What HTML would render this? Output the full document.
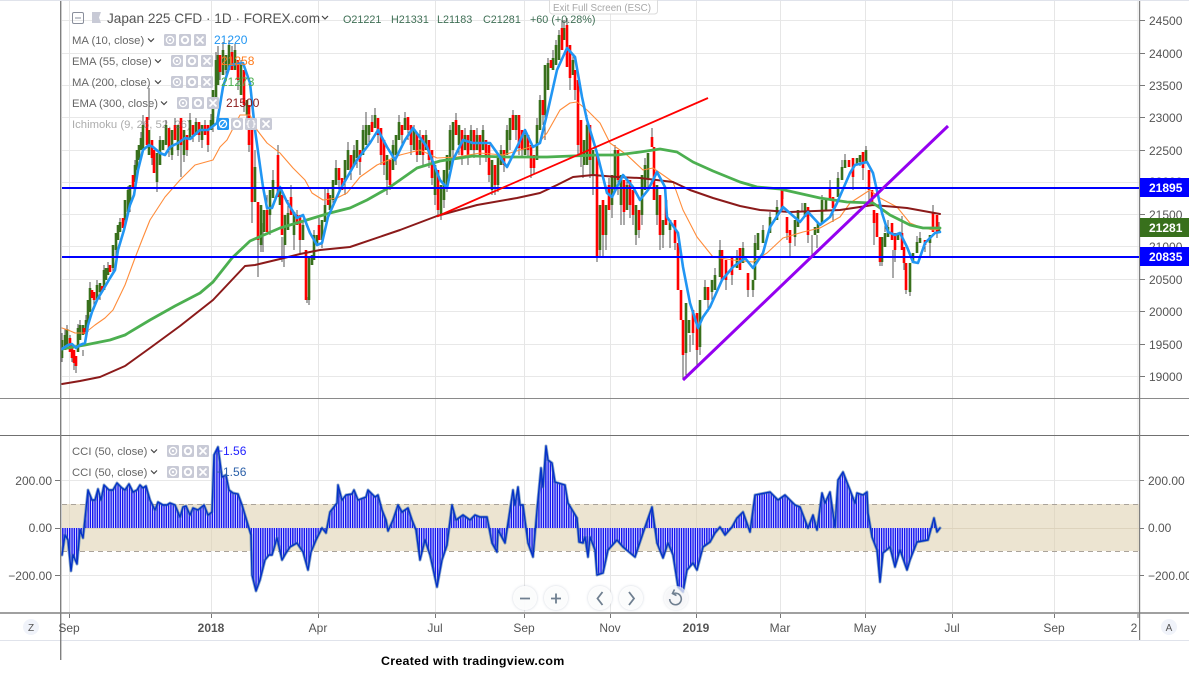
<!DOCTYPE html>
<html><head><meta charset="utf-8"><style>
html,body{margin:0;padding:0;background:#fff;width:1189px;height:680px;overflow:hidden}
svg{display:block;font-family:"Liberation Sans",sans-serif}
.ax{font-size:12px;fill:#555}
.lg{font-size:11.3px;fill:#666}
.hd{font-size:10.8px;fill:#3f6f55}
.m{fill:none;stroke-linejoin:round;stroke-linecap:round}
</style></head><body>
<svg id="s" width="1189" height="680" viewBox="0 0 1189 680" xmlns="http://www.w3.org/2000/svg">
<defs>
<pattern id="st" width="2.3" height="10" patternUnits="userSpaceOnUse"><rect width="2.3" height="10" fill="#fff"/><rect width="1.5" height="10" fill="#1616f0"/></pattern>
<g id="bn"><rect width="12" height="12" rx="1.5" fill="#c8cad6"/><circle cx="6" cy="6" r="3.6" fill="none" stroke="#fff" stroke-width="1.3"/><circle cx="6" cy="6" r="1.1" fill="#fff"/></g>
<g id="bg"><rect width="12" height="12" rx="1.5" fill="#c8cad6"/><circle cx="6" cy="6" r="3.2" fill="none" stroke="#fff" stroke-width="2"/></g>
<g id="bx"><rect width="12" height="12" rx="1.5" fill="#c8cad6"/><path d="M2.5 2.5L9.5 9.5M9.5 2.5L2.5 9.5" stroke="#fff" stroke-width="1.7"/></g>
<g id="tr"><use href="#bn" x="0"/><use href="#bg" x="15"/><use href="#bx" x="30"/></g>
<filter id="sh" x="-30%" y="-30%" width="160%" height="160%"><feDropShadow dx="0" dy="0" stdDeviation="1.2" flood-color="#8090a8" flood-opacity=".45"/></filter>
</defs>
<rect x="0" y="0" width="1189" height="1" fill="#e0e3eb"/>
<!-- grid -->
<path d="M62 20.5H1139M62 53.5H1139M62 85.5H1139M62 117.5H1139M62 150.5H1139M62 182.5H1139M62 214.5H1139M62 246.5H1139M62 279.5H1139M62 311.5H1139M62 344.5H1139M62 376.5H1139M62 480.5H1139M62 575.5H1139" stroke="#e8e8e8" fill="none"/>
<path d="M69.5 1V613M211.5 1V613M318.5 1V613M435.5 1V613M524.5 1V613M610.5 1V613M696.5 1V613M780.5 1V613M865.5 1V613M952.5 1V613M1054.5 1V613M1138 1V613" stroke="#e6e6e6" fill="none"/>
<!-- CCI band -->
<rect x="62" y="504" width="1077" height="47" fill="#dccdac" fill-opacity=".55"/>
<path d="M62 504.5H1139M62 551.5H1139" stroke="#aaa39a" stroke-dasharray="5 4" fill="none"/>
<path d="M62 528.5H1139" stroke="#ddd3bd" fill="none"/>
<!-- wicks -->
<path fill="none" stroke="#555" stroke-width="1" d="M62 333V362M65 329V338M67 325V332M70 335V340M72 358V362M74 362V370M76 366V373M78 324V330M80 320V328M83 350V356M86 315V322M88 325V332M90 282V290M94 300V308M97 280V288M100 292V300M104 265V272M108 262V270M113 268V274M116 250V256M120 218V224M125 220V226M128 186V192M130 205V212M135 160V167M137 170V176M141 132V140M143 115V126M149 88V120M152 158V165M157 182V192M160 136V142M166 120V127M169 150V157M172 155V160M175 118V127M178 150V156M181 145V177M184 155V162M187 150V156M190 113V122M193 135V142M196 118V124M199 135V142M202 140V148M205 120V127M208 145V152M211 114V122M213 125V132M216 52V62M218 46V56M220 72V80M223 42V52M226 70V78M229 40V47M232 46V54M235 44V52M238 80V90M241 60V67M244 105V112M247 115V122M249 145V152M252 202V223M255 150V168M258 240V277M261 245V252M263 223V252M267 195V212M270 215V235M273 170V182M278 145V157M282 237V262M284 237V267M288 200V215M291 185V198M294 235V250M297 210V217M300 240V254M303 220V227M307 297V303M309 300V305M314 230V237M319 218V227M322 240V248M325 187V207M328 188V195M333 200V208M336 160V170M339 180V190M345 180V195M348 142V152M351 170V180M354 145V152M357 158V168M360 162V175M363 125V132M366 112V127M369 135V145M372 115V124M375 108V117M378 135V143M381 155V165M384 165V175M387 180V195M390 185V190M393 140V147M396 155V165M399 115V124M402 135V145M405 112V120M408 130V140M411 145V155M414 125V132M417 155V162M420 130V142M423 155V165M426 130V137M429 160V168M432 178V185M435 195V205M438 210V217M441 215V220M444 200V208M447 185V192M450 125V132M453 150V160M456 113V122M459 145V155M462 155V165M465 128V137M468 155V165M471 125V132M474 150V158M477 128V137M480 155V165M483 125V132M486 155V162M489 175V182M492 190V195M495 185V195M498 185V192M501 145V152M504 165V172M507 125V132M510 140V150M513 110V117M516 130V140M519 148V155M522 150V158M525 130V137M528 150V158M531 168V178M534 168V174M537 118V127M540 95V102M543 115V125M545 115V140M548 58V65M553 50V60M556 40V47M559 30V37M562 20V30M564 20V30M567 18V27M570 78V90M573 55V62M575 90V100M578 145V155M581 155V167M583 165V178M587 115V127M590 160V178M593 175V195M597 258V262M600 250V258M603 235V258M606 235V250M609 178V187M612 205V218M615 145V152M618 180V195M621 205V225M624 212V225M627 178V187M630 205V218M633 215V225M636 235V245M639 230V238M642 215V225M645 158V167M648 178V190M652 128V139M657 215V225M660 235V250M663 235V248M666 195V202M670 230V248M675 243V250M683 355V378M686 353V375M690 335V352M693 333V345M697 350V365M700 347V355M705 280V289M708 300V312M712 290V300M715 268V277M720 240V252M726 280V290M732 275V285M737 250V258M743 242V250M748 290V297M753 290V297M755 235V245M763 225V232M770 212V219M777 200V209M783 187V199M787 233V240M790 243V257M795 237V246M802 203V212M808 235V243M812 235V255M817 235V248M822 195V202M830 180V189M833 208V222M838 172V180M842 160V169M845 154V162M853 177V190M860 158V166M863 168V180M866 146V152M869 190V200M874 223V245M880 262V266M882 262V266M885 225V232M888 220V229M893 250V278M895 250V262M902 216V235M904 263V270M906 290V294M910 292V296M917 236V244M920 232V240M925 245V252M930 243V258M933 205V215M937 232V238M939 222V230"/>
<!-- green bodies -->
<path fill="none" stroke="#38701c" stroke-width="2.6" d="M62 340V358M65 335V350M67 329V345M78 328V352M80 325V340M83 325V335M86 320V332M88 300V325M90 288V312M97 285V300M100 283V292M104 270V290M106 268V280M108 268V275M113 245V268M116 233V250M118 225V240M120 222V232M125 200V220M128 190V212M130 185V205M135 165V182M137 150V170M139 145V160M141 138V150M143 125V150M149 130V155M157 153V182M160 140V165M163 140V150M166 125V145M172 130V155M178 125V150M184 130V155M190 120V140M196 122V135M202 125V140M211 120V130M213 90V125M216 60V100M218 55V85M223 50V75M226 55V70M229 45V70M235 50V70M241 65V95M247 100V115M255 167V202M261 205V245M264 210V232M270 190V215M273 180V198M280 190V205M285 215V245M288 213V230M294 212V235M303 225V240M309 258V300M312 255V265M314 235V260M317 235V245M322 220V240M325 205V222M330 195V210M333 180V200M336 168V185M345 160V180M348 150V170M354 150V165M357 140V158M363 130V155M366 125V145M369 125V135M375 115V128M387 155V180M393 145V170M396 135V155M399 122V140M405 118V130M414 130V150M420 140V155M426 135V150M435 165V195M441 185V215M444 170V200M447 155V185M450 130V170M453 122V150M459 125V145M465 135V150M471 130V150M477 135V150M483 130V150M492 160V190M498 155V185M501 150V165M507 130V155M510 118V140M516 115V130M525 135V155M537 125V160M540 100V130M545 65V115M548 63V90M553 58V70M556 45V65M559 35V60M564 28V40M573 60V75M584 140V165M587 125V165M593 150V175M600 205V250M606 205V235M612 175V205M615 150V190M621 175V205M627 185V210M636 205V235M642 175V215M645 165V190M648 153V178M657 185V215M663 220V235M670 220V230M686 303V353M689 320V333M700 300V347M705 287V300M712 280V292M715 275V290M720 250V277M737 257V268M743 248V263M753 280V290M755 243V280M758 233V250M763 230V243M770 217V233M777 207V220M795 220V237M798 210V227M805 203V217M815 227V235M818 223V233M822 200V223M826 200V210M838 178V197M842 167V180M845 160V168M857 158V165M860 155V162M866 150V163M882 237V262M885 233V247M888 227V237M898 233V240M910 263V292M913 253V263M917 242V253M920 238V243M930 235V243M939 228V232"/>
<!-- red bodies -->
<path fill="none" stroke="#ff0000" stroke-width="2.6" d="M70 338V352M72 345V358M74 350V363M76 356V366M84 328V334M92 290V298M94 292V300M102 286V292M110 265V272M123 218V228M133 175V188M147 117V145M152 140V158M154 150V173M169 128V150M175 125V140M181 118V145M187 135V150M193 125V135M199 122V135M205 125V135M208 125V145M220 55V72M232 52V70M238 60V80M244 70V105M249 105V145M252 130V202M258 202V240M267 210V232M278 155V197M282 195V235M291 197V215M297 215V225M300 215V240M306 250V300M319 225V240M328 193V205M339 168V180M342 178V190M351 155V170M360 150V162M372 122V132M378 118V135M381 128V155M384 140V165M390 160V185M402 125V135M408 117V130M411 125V145M417 133V155M423 135V155M429 140V160M432 150V178M438 170V210M456 120V135M462 130V155M468 135V155M474 130V150M480 135V155M486 140V155M489 145V175M495 165V185M504 150V165M513 115V130M519 115V148M522 130V150M528 135V150M531 145V168M534 155V168M543 100V115M551 60V68M562 28V50M567 25V67M570 45V78M575 70V90M578 80V145M581 120V155M590 125V160M597 155V258M603 200V235M609 185V210M618 150V180M624 180V212M630 180V205M633 190V215M639 210V230M652 137V147M654 147V200M660 195V235M666 200V225M675 220V243M678 243V290M681 290V320M683 320V355M693 310V333M697 313V350M708 287V300M722 250V280M726 260V280M732 257V275M740 248V270M748 273V290M782 190V210M787 217V233M790 230V243M808 207V235M830 187V200M833 197V208M849 160V167M853 158V177M863 152V168M869 170V190M872 190V203M874 210V223M877 213V237M880 237V262M892 223V240M895 233V250M902 233V250M904 247V263M906 263V290M925 240V245M933 213V232M937 215V232"/>
<!-- MAs -->
<polyline class="m" stroke="#ff8c3a" stroke-width="1.1" points="62,328 68,330 75,333 85,333 95,325 105,318 113,310 125,285 135,258 142,240 150,220 165,197 180,180 195,165 213,160 220,147 227,140 240,115 250,115 257,130 267,143 280,153 293,168 305,180 312,193 323,200 337,198 347,193 360,177 377,165 400,155 420,150 437,158 457,157 480,153 503,155 520,150 537,145 547,133 560,110 570,103 577,102 587,110 600,123 610,143 627,155 643,170 653,168 673,182 683,210 697,237 713,257 733,260 753,262 767,253 783,238 803,232 820,228 840,217 850,203 870,190 880,198 897,207 910,223 920,227 933,230 940,229"/>
<polyline class="m" stroke="#8b1a1a" stroke-width="2" points="62,384 80,381 100,377 125,366 150,348 180,326 213,300 245,266 255,265 280,259 300,254 320,250 350,247 400,230 437,216 477,205 517,198 540,193 557,185 573,177 593,175 617,177 640,178 673,182 690,190 713,198 740,206 760,210 790,212 840,210 873,205 907,208 940,214"/>
<polyline class="m" stroke="#4caf50" stroke-width="2.8" points="62,349 85,345 110,340 125,335 150,320 175,306 200,293 213,282 232,258 250,241 280,228 300,222 330,213 350,208 367,200 390,187 417,168 440,161 473,156 507,157 547,157 597,155 617,155 640,152 660,149 677,152 693,162 713,171 740,182 757,187 780,189 820,198 847,202 873,203 890,215 910,225 923,228 940,228"/>
<polyline class="m" stroke="#2196f3" stroke-width="2.6" points="62,349 68,345 72,344 76,348 80,345 85,343 88,325 92,312 97,300 103,290 110,278 115,270 118,250 124,230 130,205 134,195 138,170 143,150 149,145 153,147 160,153 165,155 170,147 178,143 185,138 190,139 200,130 208,130 217,123 223,87 230,65 243,63 250,83 255,130 263,187 267,208 272,208 280,187 287,202 297,218 303,215 310,233 317,245 322,243 328,217 340,190 357,160 370,143 378,130 387,147 395,160 405,140 413,128 427,147 440,180 447,188 453,160 463,140 473,143 490,143 500,157 507,167 517,147 525,130 533,147 540,143 548,110 557,70 567,48 575,57 582,97 587,120 597,153 607,193 612,197 623,175 633,187 640,200 648,190 657,172 665,187 667,217 678,233 683,267 690,303 698,328 703,317 710,307 722,280 733,267 745,258 753,268 763,253 770,227 783,207 800,222 808,212 820,225 830,217 837,203 850,173 855,165 867,162 873,173 882,213 888,232 895,235 900,233 907,247 913,262 918,263 925,243 935,233 940,232"/>
<!-- horizontal lines and trendlines -->
<path d="M62 188H1139M62 257H1139" stroke="#0000ff" stroke-width="2"/>
<path d="M437 216.5L708 98" stroke="#ff0000" stroke-width="1.8"/>
<path d="M683 380L948 126" stroke="#9400f0" stroke-width="3"/>
<!-- CCI -->
<polygon fill="url(#st)" points="62,528 62,555 65,535 68,540 71,571 73,555 77,564 80,530 83,538 85,528"/>
<polygon fill="url(#st)" points="85,528 88,490 92,500 95,500 98,489 101,500 104,485 109,490 113,490 117,483 122,488 125,490 129,484 133,492 137,490 140,485 143,488 146,486 150,500 155,510 158,502 163,505 167,505 170,503 175,505 180,517 183,507 186,506 190,515 193,508 198,510 204,505 208,515 212,512 214,455 218,447 222,477 226,475 229,490 233,493 238,494 242,505 245,515 248,528 251,535 252,575 256,591 260,580 265,560 269,555 272,555 277,538 282,560 286,553 290,547 297,543 303,552 308,570 311,552 316,540 322,528 326,533 330,512 337,503 338,485 342,500 346,495 352,494 354,490 358,500 366,497 368,490 375,497 378,495 382,510 386,520 388,531 393,520 398,505 402,512 408,508 412,520 416,530 420,560 425,540 430,555 437,587 442,560 447,545 452,505 456,520 463,515 470,520 475,515 480,517 487,517 492,543 497,552 498,530 505,543 513,490 515,505 518,487 520,505 523,505 528,543 533,557 537,510 541,468 543,487 546,446 548,460 552,463 555,482 565,485 568,503 577,518 579,542 583,543 585,537 588,557 590,537 595,550 597,575 603,573 608,550 617,540 623,547 635,557 643,533 652,507 657,543 663,558 668,543 673,555 678,587 683,592 687,570 693,563 697,570 703,547 710,542 715,533 720,527 725,535 732,527 737,518 743,512 750,532 755,495 770,492 778,500 785,495 795,505 800,507 808,528 813,515 817,530 822,493 825,503 830,492 835,527 838,480 843,472 850,490 855,503 857,493 863,495 867,492 868,513 872,537 877,550 880,582 883,553 890,547 895,567 900,550 907,570 910,560 917,542 928,540 934,518 937,532 940,528"/>
<polyline class="m" stroke="#3a6ea0" stroke-width="3" stroke-opacity=".55" points="62,555 65,535 68,540 71,571 73,555 77,564 80,530 83,538 88,490 92,500 95,500 98,489 101,500 104,485 109,490 113,490 117,483 122,488 125,490 129,484 133,492 137,490 140,485 143,488 146,486 150,500 155,510 158,502 163,505 167,505 170,503 175,505 180,517 183,507 186,506 190,515 193,508 198,510 204,505 208,515 212,512 214,455 218,447 222,477 226,475 229,490 233,493 238,494 242,505 245,515 248,525 251,535 252,575 256,591 260,580 265,560 269,555 272,555 277,538 282,560 286,553 290,547 297,543 303,552 308,570 311,552 316,540 322,528 326,533 330,512 337,503 338,485 342,500 346,495 352,494 354,490 358,500 366,497 368,490 375,497 378,495 382,510 386,520 388,531 393,520 398,505 402,512 408,508 412,520 416,530 420,560 425,540 430,555 437,587 442,560 447,545 452,505 456,520 463,515 470,520 475,515 480,517 487,517 492,543 497,552 498,530 505,543 513,490 515,505 518,487 520,505 523,505 528,543 533,557 537,510 541,468 543,487 546,446 548,460 552,463 555,482 565,485 568,503 577,518 579,542 583,543 585,537 588,557 590,537 595,550 597,575 603,573 608,550 617,540 623,547 635,557 643,533 652,507 657,543 663,558 668,543 673,555 678,587 683,592 687,570 693,563 697,570 703,547 710,542 715,533 720,527 725,535 732,527 737,518 743,512 750,532 755,495 770,492 778,500 785,495 795,505 800,507 808,528 813,515 817,530 822,493 825,503 830,492 835,527 838,480 843,472 850,490 855,503 857,493 863,495 867,492 868,513 872,537 877,550 880,582 883,553 890,547 895,567 900,550 907,570 910,560 917,542 928,540 934,518 937,532 940,528"/>
<polyline class="m" stroke="#0432c8" stroke-width="1.4" points="62,555 65,535 68,540 71,571 73,555 77,564 80,530 83,538 88,490 92,500 95,500 98,489 101,500 104,485 109,490 113,490 117,483 122,488 125,490 129,484 133,492 137,490 140,485 143,488 146,486 150,500 155,510 158,502 163,505 167,505 170,503 175,505 180,517 183,507 186,506 190,515 193,508 198,510 204,505 208,515 212,512 214,455 218,447 222,477 226,475 229,490 233,493 238,494 242,505 245,515 248,525 251,535 252,575 256,591 260,580 265,560 269,555 272,555 277,538 282,560 286,553 290,547 297,543 303,552 308,570 311,552 316,540 322,528 326,533 330,512 337,503 338,485 342,500 346,495 352,494 354,490 358,500 366,497 368,490 375,497 378,495 382,510 386,520 388,531 393,520 398,505 402,512 408,508 412,520 416,530 420,560 425,540 430,555 437,587 442,560 447,545 452,505 456,520 463,515 470,520 475,515 480,517 487,517 492,543 497,552 498,530 505,543 513,490 515,505 518,487 520,505 523,505 528,543 533,557 537,510 541,468 543,487 546,446 548,460 552,463 555,482 565,485 568,503 577,518 579,542 583,543 585,537 588,557 590,537 595,550 597,575 603,573 608,550 617,540 623,547 635,557 643,533 652,507 657,543 663,558 668,543 673,555 678,587 683,592 687,570 693,563 697,570 703,547 710,542 715,533 720,527 725,535 732,527 737,518 743,512 750,532 755,495 770,492 778,500 785,495 795,505 800,507 808,528 813,515 817,530 822,493 825,503 830,492 835,527 838,480 843,472 850,490 855,503 857,493 863,495 867,492 868,513 872,537 877,550 880,582 883,553 890,547 895,567 900,550 907,570 910,560 917,542 928,540 934,518 937,532 940,528"/>
<!-- frame lines -->
<rect x="0" y="398" width="1189" height="1" fill="#8a8a8a"/>
<rect x="0" y="435" width="1189" height="1" fill="#707070"/>
<rect x="0" y="612" width="1189" height="2" fill="#a0a0a0"/>
<rect x="0" y="640" width="1189" height="1" fill="#e0e3eb"/>
<rect x="60" y="1" width="1.4" height="659" fill="#808080"/>
<rect x="1139" y="1" width="1.2" height="639" fill="#808080"/>
<!-- ticks -->
<path d="M1140 20.5h5M1140 53.5h5M1140 85.5h5M1140 117.5h5M1140 150.5h5M1140 214.5h5M1140 279.5h5M1140 311.5h5M1140 344.5h5M1140 376.5h5M1140 480.5h4M1140 528.5h4M1140 575.5h4M55 480.5h5M55 528.5h5M55 575.5h5M69.5 614v4M211.5 614v4M318.5 614v4M435.5 614v4M524.5 614v4M610.5 614v4M696.5 614v4M780.5 614v4M865.5 614v4M952.5 614v4M1054.5 614v4M1138 614v4" stroke="#777" fill="none"/>
<!-- right axis labels -->
<g class="ax">
<text x="1149" y="25">24500</text><text x="1149" y="58">24000</text><text x="1149" y="90">23500</text><text x="1149" y="122">23000</text><text x="1149" y="155">22500</text><text x="1149" y="186">22000</text><text x="1149" y="219">21500</text><text x="1149" y="251">21000</text><text x="1149" y="284">20500</text><text x="1149" y="316">20000</text><text x="1149" y="349">19500</text><text x="1149" y="381">19000</text>
<text x="1148" y="485">200.00</text><text x="1148" y="532">0.00</text><text x="1148" y="580">−200.00</text>
<text x="52" y="485" text-anchor="end">200.00</text><text x="52" y="532" text-anchor="end">0.00</text><text x="52" y="580" text-anchor="end">−200.00</text>
</g>
<rect x="1140" y="178" width="49" height="19" fill="#0000ff"/>
<rect x="1140" y="218" width="49" height="19" fill="#38701c"/>
<rect x="1140" y="247" width="49" height="19" fill="#0000ff"/>
<g font-size="12" fill="#fff" font-weight="bold"><text x="1149" y="192">21895</text><text x="1149" y="232">21281</text><text x="1149" y="261">20835</text></g>
<!-- time axis -->
<g class="ax" text-anchor="middle">
<text x="69" y="632">Sep</text><text x="211" y="632" font-weight="bold">2018</text><text x="318" y="632">Apr</text><text x="435" y="632">Jul</text><text x="524" y="632">Sep</text><text x="610" y="632">Nov</text><text x="696" y="632" font-weight="bold">2019</text><text x="780" y="632">Mar</text><text x="865" y="632">May</text><text x="952" y="632">Jul</text><text x="1054" y="632">Sep</text><text x="1134" y="632">2</text>
</g>
<circle cx="31" cy="627" r="8" fill="#f0f3fa"/><text x="31" y="631" font-size="10" fill="#555" text-anchor="middle">Z</text>
<circle cx="1169" cy="627" r="8" fill="#f0f3fa"/><text x="1169" y="631" font-size="10" fill="#555" text-anchor="middle">A</text>
<!-- legend -->
<rect x="72.5" y="12.5" width="11" height="11" rx="1.5" fill="none" stroke="#8a8f9c"/><path d="M75 18h6" stroke="#8a8f9c"/>
<path d="M92 12h9l-2 5.500 2 5.500h-9z" fill="#c8cad6"/>
<text x="107" y="23" font-size="13.6" fill="#555">Japan 225 CFD · 1D · FOREX.com</text>
<path d="M322 16l3 3 3-3" fill="none" stroke="#444" stroke-width="1.2"/>
<g class="hd"><text x="343" y="23">O21221</text><text x="391" y="23">H21331</text><text x="437" y="23">L21183</text><text x="483" y="23">C21281</text><text x="530" y="23">+60 (+0.28%)</text></g>
<path d="M549.500 0v11a3 3 0 0 0 3 3h102a3 3 0 0 0 3-3V0z" fill="#fff" stroke="#dcdcdc"/>
<text x="553" y="11" font-size="9.800" fill="#a8a8a8">Exit Full Screen (ESC)</text>
<g class="lg">
<text x="72" y="44">MA (10, close)</text>
<text x="72" y="65">EMA (55, close)</text>
<text x="72" y="86">MA (200, close)</text>
<text x="72" y="107">EMA (300, close)</text>
<text x="72" y="128" fill-opacity=".55">Ichimoku (9, 26, 52, 26)</text>
<text x="72" y="455">CCI (50, close)</text>
<text x="72" y="476">CCI (50, close)</text>
</g>
<path d="M148 38.500l3 3 3-3M155 59.500l3 3 3-3M155 80.500l3 3 3-3M161 101.500l3 3 3-3M151 449.500l3 3 3-3M151 470.500l3 3 3-3" fill="none" stroke="#444" stroke-width="1.2"/>
<use href="#tr" x="164" y="34"/><use href="#tr" x="171" y="55"/><use href="#tr" x="171" y="76"/><use href="#tr" x="177" y="97"/>
<use href="#tr" x="167" y="445"/><use href="#tr" x="167" y="466"/>
<g transform="translate(217 118)"><rect width="12" height="12" rx="1.500" fill="#2196f3"/><circle cx="6" cy="6" r="3.600" fill="none" stroke="#fff" stroke-width="1.300"/><path d="M3 9.500L9 2.500" stroke="#fff"/></g>
<use href="#bg" x="231" y="118"/>
<g transform="translate(245 118)"><rect width="12" height="12" rx="1.500" fill="#c8cad6"/><path d="M4.500 2.500q-1.500 0-1.500 1.500v1.500l-1 .5 1 .5v1.500q0 1.500 1.500 1.500M7.500 2.500q1.500 0 1.500 1.500v1.500l1 .5-1 .5v1.500q0 1.500-1.500 1.500" fill="none" stroke="#fff"/></g>
<use href="#bx" x="260" y="118"/>
<g font-size="12">
<text x="214" y="44" fill="#2196f3">21220</text>
<text x="221" y="65" fill="#ff7a1a">21258</text>
<text x="221" y="86" fill="#4caf50">21273</text>
<text x="226" y="107" fill="#8b1a1a">21500</text>
<text x="216" y="455" fill="#2222ff">−1.56</text>
<text x="216" y="476" fill="#2a5fa8">−1.56</text>
</g>
<!-- nav buttons -->
<g fill="#fff" fill-opacity=".9" filter="url(#sh)"><circle cx="525" cy="598" r="12"/><circle cx="556" cy="598" r="12"/><circle cx="600" cy="598" r="12"/><circle cx="631" cy="598" r="12"/></g>
<circle cx="676" cy="598" r="12" fill="#fff" fill-opacity=".65" filter="url(#sh)"/>
<g fill="none" stroke="#6f7f90" stroke-width="1.800"><path d="M520 598.500h10M551 598.500h10M556 593.500v10M602.500 592l-5 6.500 5 6.500M629 592l5 6.500-5 6.500"/><path d="M673.500 593.500A5.800 5.800 0 1 1 669.700 599" stroke-width="1.600"/><path d="M674.500 589.500L672.500 593.500L676.500 595.500" stroke-width="1.600"/></g>
<text x="381" y="665" font-size="12.400" letter-spacing=".3" font-weight="bold" fill="#000">Created with tradingview.com</text>
</svg>
</body></html>
